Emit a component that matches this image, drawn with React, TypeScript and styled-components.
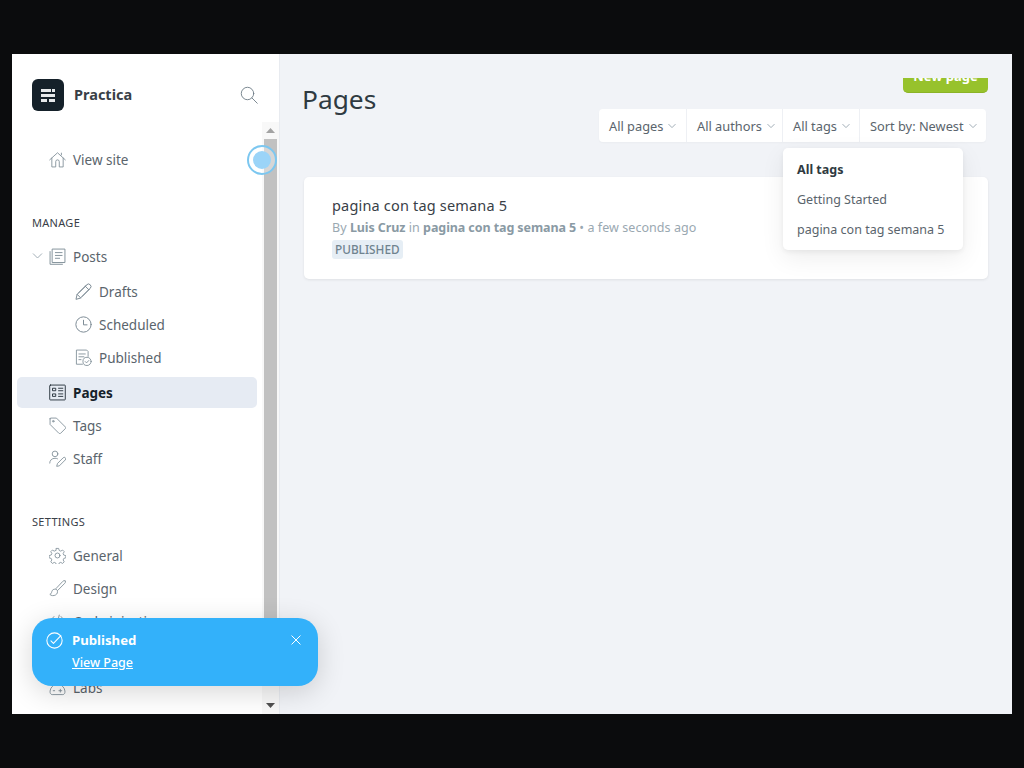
import React from "react";
import styled, { createGlobalStyle } from "styled-components";

const Global = createGlobalStyle`
  html, body { margin: 0; padding: 0; height: 100%; background: #0b0c0d; }
  body { font-family: "Noto Sans", "Open Sans", "Liberation Sans", sans-serif; color: #394047; }
  * { box-sizing: border-box; }
`;

const Page = styled.div`
  width: 1024px; height: 768px; padding: 54px 12px; background: #0b0c0d; overflow: hidden;
`;
const Shell = styled.div`
  position: relative; display: flex; width: 1000px; height: 660px; overflow: hidden; background: #f1f3f7;
`;
const Sidebar = styled.aside`
  width: 268px; flex: none; display: flex; flex-direction: column; background: #fff; border-right: 1px solid #e8ebf0;
`;
const Brand = styled.div`
  height: 68px; flex: none; display: flex; align-items: center; padding: 25px 21px 11px 20px; gap: 10px;
`;
const Logo = styled.div`
  width: 32px; height: 32px; border-radius: 6px; background: #15212a; display: flex; align-items: center; justify-content: center;
`;
const BrandName = styled.div`
  flex: 1; font-size: 14.5px; font-weight: 700; color: #394047; padding-bottom: 2px;
`;
const SideBody = styled.div`
  flex: 1; min-height: 0; display: flex; position: relative;
`;
const Nav = styled.nav`
  flex: 1; min-width: 0; padding: 21px 5px 0; overflow: hidden; display: flex; flex-direction: column;
`;
const Section = styled.div<{ $top: number }>`
  flex: none; height: 11px; margin: ${p => p.$top}px 0 12px 15px; font-size: 11px; line-height: 11px; letter-spacing: .3px; color: #394047;
`;
const Row = styled.div<{ $active?: boolean; $sub?: boolean }>`
  flex: none; height: ${p => (p.$active ? 31 : 33)}px; display: flex; align-items: center; gap: 7px; font-size: 13.5px;
  padding-left: ${p => (p.$sub ? 58 : 32)}px; position: relative;
  color: ${p => (p.$active ? "#15212a" : "#5a646c")};
  font-weight: ${p => (p.$active ? 700 : 400)};
  background: ${p => (p.$active ? "#e6ebf3" : "transparent")};
  border-radius: 5px;
  margin: ${p => (p.$active ? "3px 0 1px" : "0")};
`;
const Caret = styled.svg`
  position: absolute; left: 15px; top: 12px;
`;
const Scrollbar = styled.div`
  width: 17px; flex: none; display: flex; flex-direction: column; background: #f8f8f8; padding: 0 2px;
`;
const ScrollBtn = styled.div`
  height: 17px; flex: none; display: flex; align-items: center; justify-content: center;
`;
const Thumb = styled.div`
  flex: none; height: 530px; background: #c1c1c1;
`;
const Track = styled.div`
  flex: 1;
`;
const Pulse = styled.div`
  position: absolute; left: 235px; top: 23px; width: 30px; height: 30px; border-radius: 50%;
  border: 2px solid #7cc7f0; background: rgba(255,255,255,.35); display: flex; align-items: center; justify-content: center;
`;
const PulseDot = styled.div`
  width: 18px; height: 18px; border-radius: 50%; background: #9bd4f8;
`;
const Main = styled.main`
  flex: 1; min-width: 0; padding: 0 24px 0 22px; display: flex; flex-direction: column;
`;
const Head = styled.div`
  display: flex; justify-content: space-between; height: 123px; flex: none;
`;
const Title = styled.h1`
  margin: 27px 0 0; font-size: 26.3px; line-height: 37px; font-weight: 400; color: #2f3a41;
`;
const HeadRight = styled.div`
  display: flex; flex-direction: column; align-items: flex-end; padding-top: 24px;
`;
const NewPageClip = styled.div`
  height: 15px; display: flex; align-items: flex-end; overflow: hidden; margin-bottom: 16px;
`;
const NewPage = styled.button`
  flex: none; width: 85px; height: 39px; border: 0; border-bottom: 1px solid #8bb327; border-radius: 5px; background: #97c22c;
  color: #fff; font: 700 13px "Noto Sans", sans-serif; padding: 0 0 9px; display: flex; justify-content: center; align-items: flex-end;
  line-height: 1;
`;
const Filters = styled.div`
  display: flex; height: 33px; margin-right: 2px; background: #fff; border-radius: 4px; box-shadow: 0 1px 2px rgba(0,0,0,.03);
`;
const Filter = styled.div<{ $w: number }>`
  width: ${p => p.$w}px; display: flex; align-items: center; gap: 5px; padding-left: 10px; font-size: 12.8px; color: #5a646c;
  border-left: 1px solid #eef0f4;
  &:first-child { border-left: 0; }
`;
const Card = styled.section`
  margin-left: 2px; height: 102px; background: #fff; border-radius: 5px; padding: 18px 28px; box-shadow: 0 1px 3px rgba(0,0,0,.08);
`;
const CardTitle = styled.div`
  font-size: 14.5px; line-height: 20px; color: #394047; letter-spacing: .18px;
`;
const Meta = styled.div`
  margin-top: 4px; font-size: 12.5px; line-height: 18px; color: #9aa8b1; letter-spacing: .06px;
  b { color: #8a9aa4; font-weight: 700; letter-spacing: -.09px; }
`;
const Badge = styled.span`
  display: inline-block; margin-top: 3px; padding: 0 3px; height: 19px; line-height: 19px; font-size: 11.8px; font-weight: 500;
  background: #e6eef5; color: #6f838f; border-radius: 3px;
`;
const Dropdown = styled.div`
  position: absolute; left: 771px; top: 94px; width: 180px; height: 102px; background: #fff; border-radius: 5px;
  box-shadow: 0 2px 5px rgba(0,0,0,.06), 0 8px 24px rgba(0,0,0,.07); padding: 7px 14px;
`;
const DropItem = styled.div<{ $on?: boolean }>`
  height: 30px; line-height: 30px; font-size: 12.5px; white-space: nowrap;
  color: ${p => (p.$on ? "#2f3a41" : "#5a646c")}; font-weight: ${p => (p.$on ? 700 : 400)};
`;
const Toast = styled.div`
  position: absolute; left: 20px; top: 564px; width: 286px; height: 68px; border-radius: 20px; background: #33b1fa; color: #fff;
  padding: 12px 14px; display: grid; grid-template-columns: 26px 1fr 16px; grid-template-rows: 20px 24px; align-items: center;
  box-shadow: 0 6px 28px rgba(0,0,0,.16);
`;
const ToastTitle = styled.div`
  font-size: 13.2px; font-weight: 700; line-height: 20px;
`;
const ToastLink = styled.a`
  grid-column: 2; font-size: 12.5px; font-weight: 500; line-height: 24px; padding-top: 2px; text-decoration: underline; color: #fff;
`;
const ToastClose = styled.div`
  display: flex; justify-content: center;
`;

type IP = { size?: number; color?: string; width?: number };
const Ic = ({ children, size = 17, color = "#7c8b95", width = 1.2 }: IP & { children: React.ReactNode }) => (
  <svg width={size} height={size} viewBox="0 0 24 24" fill="none" stroke={color} strokeWidth={width} strokeLinecap="round" strokeLinejoin="round" style={{ flex: "none" }}>{children}</svg>
);
const Home = () => <Ic><path d="M1 12.5 12 2.5l11 10M4 10v12.5h5.5V15a2.5 2.5 0 0 1 5 0v7.5H20V10M17.5 3v2.5" /></Ic>;
const Posts = () => <Ic width={1.3}><path d="M5 1.5h17.5v19H5zM1.5 5v18h17.5" /><path d="M9 6.5h9.5M9 10.5h9.5M9 14.5h6" /></Ic>;
const Pencil = () => <Ic width={1.4}><path d="M1.5 22.5 3 16 16.5 2.5a2.8 2.8 0 0 1 5 5L8 21zM3 16l5 5M14.5 4.5l5 5M5 14 16 3.5M10 19 20.5 8.5" /></Ic>;
const Clock = () => <Ic width={1.4}><circle cx="12" cy="12" r="10.8" /><path d="M12 6v6.5h5" /></Ic>;
const Published = () => <Ic><path d="M10.5 21.5H2V1.5h14.5l2 2v7" /><path d="M5.5 7h9M5.5 11h7M5.5 15h3" /><circle cx="17" cy="17.5" r="5.8" /><path d="m14.4 17.7 1.9 1.9 3.2-3.4" /></Ic>;
const PagesIc = () => <Ic color="#15212a"><rect x="1" y="1.5" width="22" height="21" rx="1" /><path d="M5.5 6h4v3.5h-4zM5.5 14h4v3.5h-4zM13.5 6h6M13.5 9.5h6M13.5 14h6M13.5 17.5h6" /></Ic>;
const Tag = () => <Ic><path d="M1.5 2.5v8l12.7 12.7a1.5 1.5 0 0 0 2 0l7-7a1.5 1.5 0 0 0 0-2L10.5 1.5h-8a1 1 0 0 0-1 1z" /><circle cx="6" cy="6" r="1.1" /></Ic>;
const Staff = () => <Ic><circle cx="8.5" cy="5.5" r="4" /><path d="M1 18.5c0-4 3-6.8 7.5-6.8 1.3 0 2.5.2 3.5.7" /><path d="m11 22.5 1-3.5 8-8a2 2 0 0 1 3 3l-8 8z" /></Ic>;
const Gear = () => <Ic><circle cx="12" cy="12" r="3.5" /><path d="m10.3 1.5 3.4 0 .8 3 2.3 1 2.8-1.6 2.4 2.4-1.6 2.8 1 2.3 3 .8-.1 3.3-2.9.8-1 2.3 1.6 2.8-2.4 2.4-2.8-1.6-2.3 1-.8 3h-3.4l-.8-3-2.3-1-2.8 1.6-2.4-2.4 1.6-2.8-1-2.3-3-.8v-3.4l3-.8 1-2.3L2 6.3l2.4-2.4 2.8 1.6 2.3-1z" transform="translate(.6 .6) scale(.95)" /></Ic>;
const Brush = () => <Ic><path d="M22.8 1.3c-1.2-.8-2.3-.4-3.2.5L9.5 12.5l2.5 2.5L22.4 4.5c.9-.9 1.2-2.2.4-3.2z" /><path d="M9 13c-2.6-.4-4.5 1-5 3.3-.3 1.6-1 3.2-2.8 4 1.8 2 5.5 2.4 8.3.7 2.3-1.5 3-3.7 2.3-5.6" /></Ic>;
const Code = () => <Ic><path d="M7 5 1 12l6 7M17 5l6 7-6 7M14.5 3l-5 18" /></Ic>;
const Plug = () => <Ic><path d="M8 2v6M16 2v6M5 8h14v4a7 7 0 0 1-14 0zM12 19v4" /></Ic>;
const Labs = () => <Ic><path d="M8 1.5h8M9.5 1.5v5C6 9 2 12 1.5 17c-.3 3 1 5 3 5h15c2 0 3.3-2 3-5-.5-5-4.5-8-8-10.5v-5" /><path d="M6 16.5h2M14 16.5h4M16 14.5v4" /></Ic>;
const Search = () => <Ic size={18} color="#6d7c86"><circle cx="10" cy="10" r="8.3" /><path d="m16 16 7 7" /></Ic>;
const Chevron = ({ size = 8, color = "#95a3ad" }: IP) => (
  <svg width={size} height={size} viewBox="0 0 10 10" fill="none" stroke={color} strokeWidth={1.1} strokeLinecap="round" strokeLinejoin="round" style={{ flex: "none" }}><path d="m1 3 4 4 4-4" /></svg>
);

const App = () => (
  <Page>
    <Global />
    <Shell>
      <Sidebar>
        <Brand>
          <Logo>
            <svg width="14" height="13" viewBox="0 0 14 13" fill="#e6e9eb"><rect x="0" y="0" width="10" height="3" /><rect x="11" y="0" width="3" height="3" /><rect x="0" y="5" width="14" height="3" /><rect x="0" y="10" width="6" height="3" /><rect x="8" y="10" width="6" height="3" /></svg>
          </Logo>
          <BrandName>Practica</BrandName>
          <Search />
        </Brand>
        <SideBody>
          <Nav>
            <Row><Home />View site</Row>
            <Section $top={41}>MANAGE</Section>
            <Row>
              <Caret width="12" height="8" viewBox="0 0 12 8" fill="none" stroke="#a3afb7" strokeWidth="1"><path d="m1 1.5 4.5 4.5L10 1.5" /></Caret>
              <Posts />Posts
            </Row>
            <Row $sub style={{ marginTop: 2 }}><Pencil />Drafts</Row>
            <Row $sub><Clock />Scheduled</Row>
            <Row $sub><Published />Published</Row>
            <Row $active><PagesIc />Pages</Row>
            <Row><Tag />Tags</Row>
            <Row><Staff />Staff</Row>
            <Section $top={41}>SETTINGS</Section>
            <Row><Gear />General</Row>
            <Row><Brush />Design</Row>
            <Row><Code />Code injection</Row>
            <Row><Plug />Integrations</Row>
            <Row><Labs />Labs</Row>
          </Nav>
          <Scrollbar>
            <ScrollBtn><svg width="9" height="5"><path d="M0 5 4.5 0 9 5z" fill="#a3a3a3" /></svg></ScrollBtn>
            <Thumb />
            <Track />
            <ScrollBtn><svg width="9" height="5"><path d="M0 0 4.5 5 9 0z" fill="#505050" /></svg></ScrollBtn>
          </Scrollbar>
          <Pulse><PulseDot /></Pulse>
        </SideBody>
      </Sidebar>
      <Main>
        <Head>
          <Title>Pages</Title>
          <HeadRight>
            <NewPageClip><NewPage>New page</NewPage></NewPageClip>
            <Filters>
              <Filter $w={87}>All pages<Chevron /></Filter>
              <Filter $w={96}>All authors<Chevron /></Filter>
              <Filter $w={77}>All tags<Chevron /></Filter>
              <Filter $w={127}>Sort by: Newest<Chevron /></Filter>
            </Filters>
          </HeadRight>
        </Head>
        <Card>
          <CardTitle>pagina con tag semana 5</CardTitle>
          <Meta>By <b>Luis Cruz</b> in <b>pagina con tag semana 5</b> • a few seconds ago</Meta>
          <Badge>PUBLISHED</Badge>
        </Card>
      </Main>
      <Dropdown>
        <DropItem $on>All tags</DropItem>
        <DropItem>Getting Started</DropItem>
        <DropItem>pagina con tag semana 5</DropItem>
      </Dropdown>
      <Toast>
        <Ic size={17} color="#fff" width={1.5}><circle cx="12" cy="12" r="10.8" /><path d="m7 12.5 3.5 3.5L21 5" /></Ic>
        <ToastTitle>Published</ToastTitle>
        <ToastClose><Ic size={10} color="#fff" width={2.4}><path d="M2 2l20 20M22 2 2 22" /></Ic></ToastClose>
        <ToastLink>View Page</ToastLink>
      </Toast>
    </Shell>
  </Page>
);

export default App;
